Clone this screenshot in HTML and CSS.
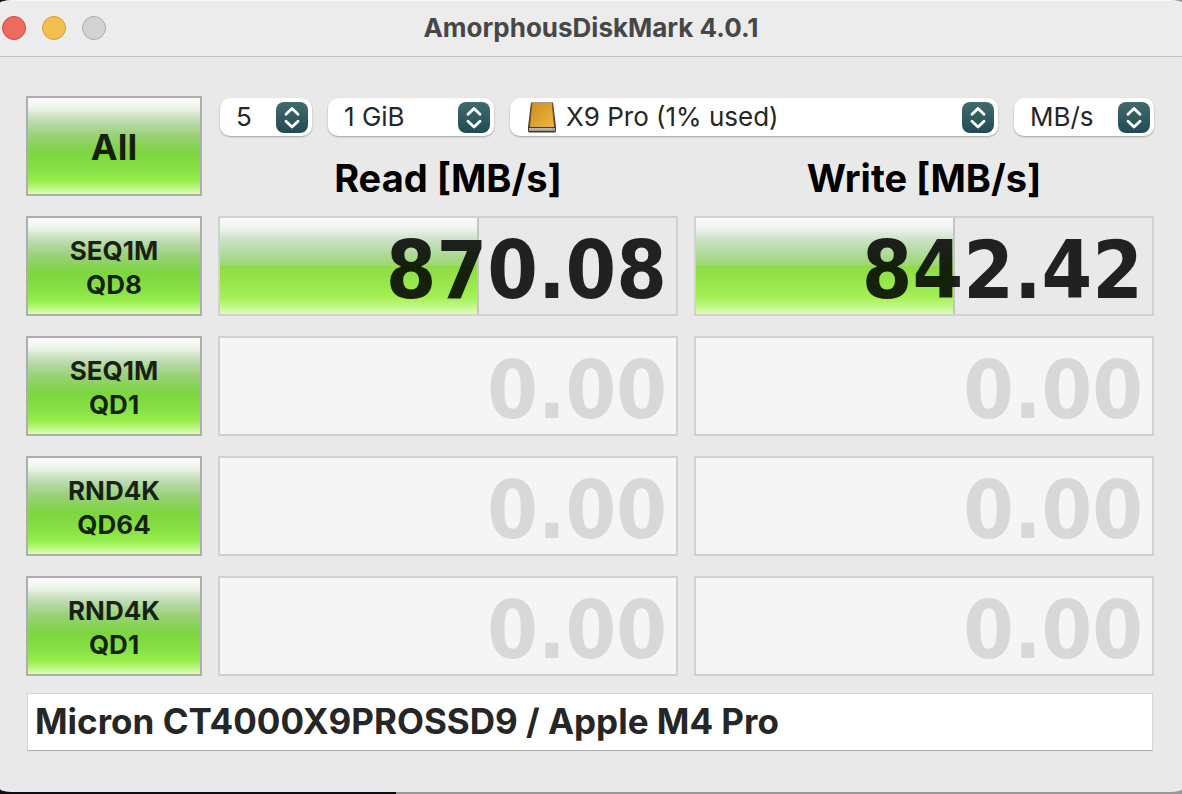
FILE: index.html
```
<!DOCTYPE html>
<html lang="en">
<head>
<meta charset="utf-8">
<title>AmorphousDiskMark 4.0.1</title>
<link rel="stylesheet" href="styles.css">
</head>
<body>
<svg class="symbols" aria-hidden="true">
  <defs>
    <linearGradient id="teal" x1="0" y1="0" x2="0" y2="1"><stop offset="0" stop-color="#426b70"/><stop offset="1" stop-color="#204b52"/></linearGradient>
    <linearGradient id="gold" x1="0" y1="0" x2="1" y2="1"><stop offset="0" stop-color="#c98d20"/><stop offset="1" stop-color="#f0b83f"/></linearGradient>
    <symbol id="stepper" viewBox="0 0 32 32">
      <rect width="32" height="31" rx="8" fill="url(#teal)"/>
      <path d="M10 12.200 16 6.500 22 12.200M10 19.300 16 25 22 19.300" fill="none" stroke="#fff" stroke-width="2.800" stroke-linecap="round" stroke-linejoin="round"/>
    </symbol>
  </defs>
</svg>
<div class="window">
  <header class="titlebar">
    <div class="lights">
      <button class="light close" aria-label="Close"></button>
      <button class="light minimize" aria-label="Minimize"></button>
      <button class="light zoom" aria-label="Zoom" disabled></button>
    </div>
    <h1 class="title">AmorphousDiskMark 4.0.1</h1>
  </header>
  <main class="content">
    <div class="grid">
      <button class="test all">All</button>
      <div class="top">
        <div class="options">
          <div class="picker count"><select aria-label="Test count"><option>5</option></select><svg class="arrows"><use href="#stepper"/></svg></div>
          <div class="picker size"><select aria-label="Test size"><option>1 GiB</option></select><svg class="arrows"><use href="#stepper"/></svg></div>
          <div class="picker volume"><select aria-label="Volume"><option>X9 Pro (1% used)</option></select>
            <svg class="disk" viewBox="0 0 30 31" aria-hidden="true">
              <path d="M4 0.500H26L29 25V29Q29 30.500 27.500 30.500H2.500Q1 30.500 1 29V25Z" fill="#49382b"/>
              <path d="M4.800 1H25.200L27.500 25H2.500Z" fill="url(#gold)"/>
              <path d="M4.800 1 2.500 25M25.200 1 27.500 25" stroke="#74470e" stroke-width=".800"/>
              <path d="M2 26H28V28.800H2Z" fill="#b9b4ae"/>
              <circle cx="26" cy="27.500" r="1" fill="#4fd44b"/>
            </svg>
            <svg class="arrows"><use href="#stepper"/></svg></div>
          <div class="picker unit"><select aria-label="Unit"><option>MB/s</option></select><svg class="arrows"><use href="#stepper"/></svg></div>
        </div>
        <div class="headings"><h2>Read [MB/s]</h2><h2>Write [MB/s]</h2></div>
      </div>

      <button class="test">SEQ1M<br>QD8</button>
      <div class="result"><div class="fill" style="width: 56.7%"></div><output class="value">870.08</output></div>
      <div class="result"><div class="fill" style="width: 56.7%"></div><output class="value">842.42</output></div>

      <button class="test">SEQ1M<br>QD1</button>
      <div class="result idle"><output class="value">0.00</output></div>
      <div class="result idle"><output class="value">0.00</output></div>

      <button class="test">RND4K<br>QD64</button>
      <div class="result idle"><output class="value">0.00</output></div>
      <div class="result idle"><output class="value">0.00</output></div>

      <button class="test">RND4K<br>QD1</button>
      <div class="result idle"><output class="value">0.00</output></div>
      <div class="result idle"><output class="value">0.00</output></div>
    </div>
    <input class="note" type="text" aria-label="Note" value="Micron CT4000X9PROSSD9 / Apple M4 Pro">
  </main>
</div>
</body>
</html>
```
FILE: styles.css
```
* { box-sizing: border-box; }

body {
  margin: 0;
  min-height: 100vh;
  padding-bottom: 2px;
  background: linear-gradient(90deg, #0b0d10 396px, #999 396px);
  font-family: Inter, "Liberation Sans", sans-serif;
  color: #262626;
}

.symbols { position: absolute; width: 0; height: 0; }

.window {
  min-height: calc(100vh - 2px);
  padding-bottom: 41px;
  background: #e9e9e9;
  border-top: 1px solid #f8f8f8;
  border-radius: 12px / 3px;
  overflow: hidden;
}

.titlebar {
  display: grid;
  grid-template-columns: 1fr auto 1fr;
  align-items: center;
  height: 56px;
  padding-bottom: 2px;
  background: #ececec;
  border-bottom: 1px solid #bfbfbf;
}

.lights { display: flex; gap: 16px; padding-left: 2px; }

.light {
  width: 24px;
  height: 24px;
  padding: 0;
  border: 1px solid;
  border-radius: 50%;
}
.close { background: #ec6a5e; border-color: #d0493f; }
.minimize { background: #f5bf4f; border-color: #d69d38; }
.zoom { background: #d2d2d2; border-color: #acacac; }

.title { margin: 0; font-size: 26px; line-height: 32px; font-weight: 700; color: #474747; }

.content { padding: 39px 28px 0 26px; }

.grid {
  display: grid;
  grid-template-columns: 176px 1fr 1fr;
  gap: 20px 16px;
}

.test {
  min-height: 100px;
  padding: 4px 0 0;
  border: 2px solid #adadad;
  background: linear-gradient(#fbfdfa 0%, #eef4ec 10%, #bddbb1 24%, #9ad17a 38%, #7dd540 57%, #86e044 73%, #94ed4a 86%, #dbffae 100%);
  font: 700 26px/34px Inter, "Liberation Sans", sans-serif;
  color: rgba(0, 0, 0, .85);
}
.all { padding-top: 2px; font-size: 36px; }

.top { grid-column: span 2; padding-top: 2px; }
.options { display: flex; gap: 16px; padding-left: 2px; }

.picker { position: relative; }
.count { width: 92px; }
.size { width: 166px; }
.volume { flex: 1; }
.unit { width: 140px; }

.picker select {
  appearance: none;
  display: block;
  width: 100%;
  height: 38px;
  padding: 0 40px 0 16px;
  border: 0;
  border-radius: 10px;
  background: #fff;
  box-shadow: 0 1px 2px rgba(0, 0, 0, .3);
  font: 400 26px/38px Inter, "Liberation Sans", sans-serif;
  color: #262626;
}
.volume select { padding-left: 56px; }

.arrows { position: absolute; top: 4px; right: 4px; width: 32px; height: 32px; pointer-events: none; }
.disk { position: absolute; top: 4px; left: 17px; width: 30px; height: 31px; pointer-events: none; }

.headings { display: grid; grid-template-columns: 1fr 1fr; gap: 16px; margin-top: 24px; }
.headings h2 { margin: 0; text-align: center; font-size: 38px; line-height: 36px; font-weight: 700; color: #000; }

.result {
  display: grid;
  align-items: stretch;
  min-height: 100px;
  border: 2px solid #d1d1d1;
}
.fill, .value { grid-area: 1 / 1; }
.fill {
  border-right: 2px solid #c4c4c4;
  background: linear-gradient(#fbfbfb 0%, #f0f4ef 10%, #cde2c7 22%, #b2dca0 35%, #9bd66f 50%, #8edb46 50%, #97e54b 66%, #a4f054 83%, #ddfeb6 100%);
}
.value {
  align-self: center;
  padding: 8px 9px 0 0;
  text-align: right;
  font: 700 81px/88px "DejaVu Sans Condensed", "DejaVu Sans", sans-serif;
  color: rgba(0, 0, 0, .86);
}
.idle { background: #f5f5f5; }
.idle .value { color: #d8d8d8; }

.note {
  display: block;
  width: calc(100% - 2px);
  height: 58px;
  margin: 17px 1px 0;
  padding: 0 7px 2px;
  border: 1px solid #d6d6d6;
  border-bottom: 1px solid #adadad;
  background: #fff;
  font: 700 35px/48px Inter, "Liberation Sans", sans-serif;
  color: #262626;
}
```
